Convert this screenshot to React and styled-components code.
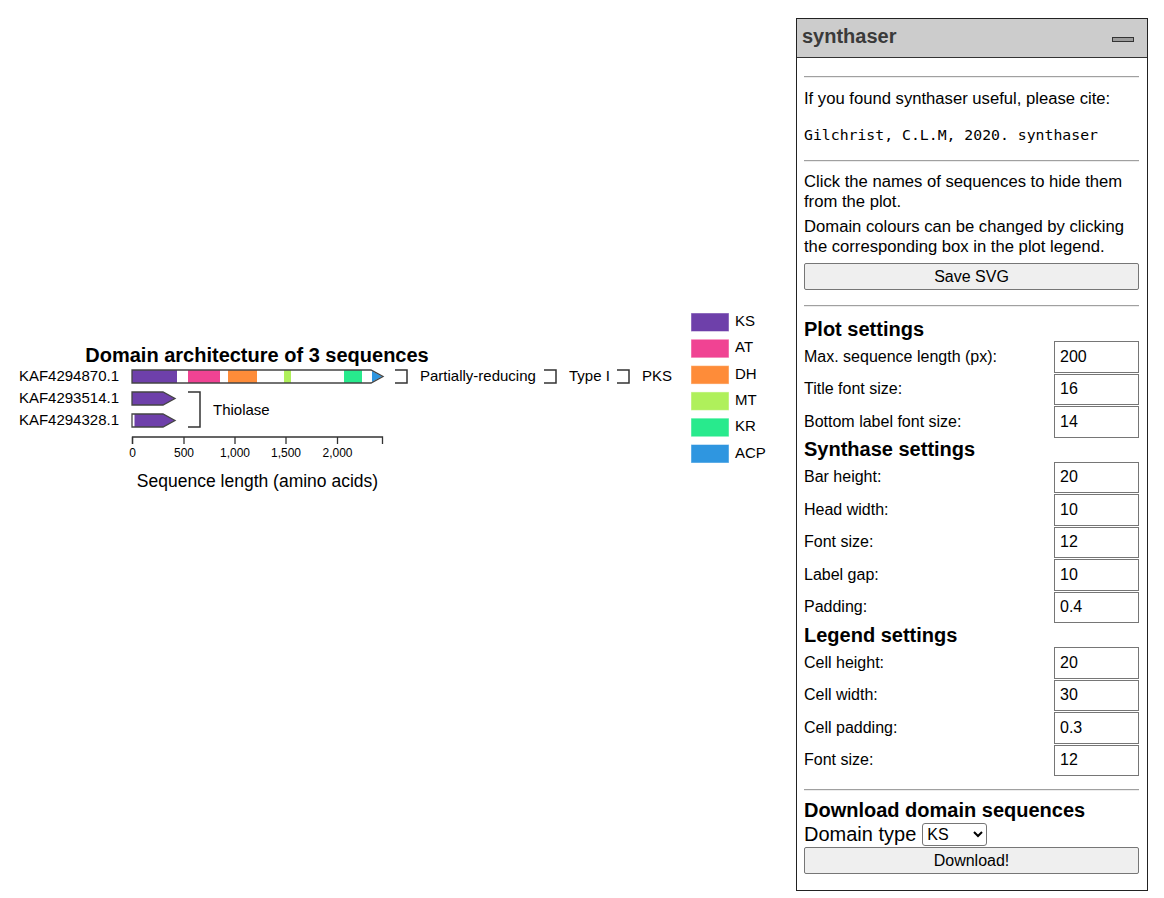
import React from 'react';
import styled, {createGlobalStyle} from 'styled-components';

const GlobalStyle = createGlobalStyle`
  body {
    margin: 0;
    background: #fff;
    font-family: "Liberation Sans", Arial, sans-serif;
    color: #000;
    overflow: hidden;
  }
`;

const Page = styled.div`
  display: flex;
  justify-content: space-between;
  align-items: flex-start;
  height: 898px;
  box-sizing: border-box;
  padding: 18px 16px 0 0;
`;

const Plot = styled.svg`
  display: block;
  margin-top: 282px;
  font-family: "Liberation Sans", Arial, sans-serif;
`;

const Panel = styled.div`
  width: 352px;
  box-sizing: border-box;
  border: 1px solid #222;
  background: #fff;
`;

const Header = styled.div`
  display: flex;
  align-items: center;
  justify-content: space-between;
  height: 38px;
  background: #cccccc;
  border-bottom: 1px solid #333;
  padding: 0 13px 0 5px;
`;

const Title = styled.span`
  font-size: 20px;
  font-weight: bold;
  color: #3a3a3a;
  margin-top: -4px;
`;

const Minimize = styled.div`
  width: 20px;
  height: 3px;
  border: 1.5px solid #333;
  background: #9c9c9c;
  margin-top: 2px;
`;

const Body = styled.div`
  display: flex;
  flex-direction: column;
  padding: 0 8px 16px 7px;
`;

const Rule = styled.hr`
  border: none;
  border-top: 1px solid #a0a0a0;
  border-bottom: 1px solid #ececec;
  height: 0;
  width: 100%;
  margin: ${(p) => p.$top}px 0 0;
`;

const Text = styled.p`
  margin: ${(p) => p.$top}px 0 0;
  font-size: 16.65px;
  line-height: ${(p) => p.$lh || 18}px;
`;

const Code = styled.code`
  display: block;
  margin-top: 17.5px;
  font-family: "DejaVu Sans Mono", "Liberation Mono", monospace;
  font-size: 14.8px;
  line-height: 17px;
`;

const Button = styled.button`
  display: block;
  width: 100%;
  height: 27px;
  margin-top: ${(p) => p.$top}px;
  background: #efefef;
  border: 1px solid #767676;
  border-radius: 2px;
  font-family: "Liberation Sans", Arial, sans-serif;
  font-size: 16px;
  color: #000;
  padding: 0;
`;

const Heading = styled.h3`
  margin: ${(p) => p.$top || 0}px 0 0;
  font-size: 20px;
  line-height: 23px;
  font-weight: bold;
`;

const Row = styled.label`
  display: flex;
  align-items: center;
  justify-content: space-between;
  height: 32.5px;
  font-size: 16px;
`;

const NumberInput = styled.input`
  width: 85px;
  height: 31.5px;
  box-sizing: border-box;
  border: 1px solid #767676;
  border-radius: 0;
  padding: 0 5px;
  font-family: "Liberation Sans", Arial, sans-serif;
  font-size: 16px;
  color: #000;
`;

const SelectRow = styled.div`
  display: flex;
  align-items: center;
  gap: 6px;
  height: 25px;
  font-size: 20px;
`;

const Select = styled.select`
  width: 65px;
  height: 23px;
  border: 1px solid #767676;
  border-radius: 3px;
  font-family: "Liberation Sans", Arial, sans-serif;
  font-size: 16px;
  background: #fff;
  color: #000;
`;

const domains = [
  {name: 'KS', color: '#6e40aa'},
  {name: 'AT', color: '#f04393'},
  {name: 'DH', color: '#fe8c39'},
  {name: 'MT', color: '#aff05b'},
  {name: 'KR', color: '#28ea8d'},
  {name: 'ACP', color: '#2f96e0'},
];
const col = Object.fromEntries(domains.map((d) => [d.name, d.color]));

const ticks = [
  {x: 132.5, label: '0'},
  {x: 184, label: '500'},
  {x: 235, label: '1,000'},
  {x: 286, label: '1,500'},
  {x: 337.5, label: '2,000'},
];

const plotSettings = [
  ['Max. sequence length (px):', '200'],
  ['Title font size:', '16'],
  ['Bottom label font size:', '14'],
];
const synthaseSettings = [
  ['Bar height:', '20'],
  ['Head width:', '10'],
  ['Font size:', '12'],
  ['Label gap:', '10'],
  ['Padding:', '0.4'],
];
const legendSettings = [
  ['Cell height:', '20'],
  ['Cell width:', '30'],
  ['Cell padding:', '0.3'],
  ['Font size:', '12'],
];

function Bracket({x, y1, y2}) {
  return <path d={`M${x},${y1} H${x + 12} V${y2} H${x}`} fill="none" stroke="#333" strokeWidth="1.5" />;
}

function Sequence({y, end, children}) {
  const top = y - 6.5;
  const bot = y + 6.5;
  const outline = `M132,${top} H${end} L${end + 12},${y} L${end},${bot} H132 Z`;
  return (
    <g>
      <path d={outline} fill="#fff" />
      {children}
      <path d={outline} fill="none" stroke="#444" strokeWidth="1.3" />
    </g>
  );
}

function DomainPlot() {
  const r1 = 376.5;
  return (
    <Plot width="780" height="200" viewBox="0 300 780 200">
      <text x="257" y="354.5" fontSize="20" fontWeight="bold" textAnchor="middle" dominantBaseline="central">
        Domain architecture of 3 sequences
      </text>

      {[
        ['KAF4294870.1', r1],
        ['KAF4293514.1', 398.5],
        ['KAF4294328.1', 420.5],
      ].map(([name, y]) => (
        <text key={name} x="119" y={y - 1} fontSize="15" textAnchor="end" dominantBaseline="central">
          {name}
        </text>
      ))}

      <Sequence y={r1} end={371}>
        <rect x="132" y={r1 - 6.5} width="45" height="13" fill={col.KS} />
        <rect x="188" y={r1 - 6.5} width="32" height="13" fill={col.AT} />
        <rect x="228" y={r1 - 6.5} width="29" height="13" fill={col.DH} />
        <rect x="284" y={r1 - 6.5} width="7" height="13" fill={col.MT} />
        <rect x="344" y={r1 - 6.5} width="18" height="13" fill={col.KR} />
        <path d={`M372,${r1 - 5.5} L382,${r1} L372,${r1 + 5.5} Z`} fill={col.ACP} />
      </Sequence>
      <Sequence y={398.5} end={163}>
        <path d="M132,392 H163 L175,398.5 L163,405 H132 Z" fill={col.KS} />
      </Sequence>
      <Sequence y={420.5} end={163}>
        <path d="M134.5,414 H163 L175,420.5 L163,427 H134.5 Z" fill={col.KS} />
      </Sequence>

      <Bracket x={395} y1={370} y2={383} />
      <text x="420" y={r1 - 1} fontSize="15" dominantBaseline="central">Partially-reducing</text>
      <Bracket x={544} y1={370} y2={383} />
      <text x="569" y={r1 - 1} fontSize="15" dominantBaseline="central">Type I</text>
      <Bracket x={617} y1={370} y2={383} />
      <text x="642" y={r1 - 1} fontSize="15" dominantBaseline="central">PKS</text>

      <Bracket x={188} y1={392} y2={427} />
      <text x="213" y="409.5" fontSize="15" dominantBaseline="central">Thiolase</text>

      <path d="M132.5,444 V437 H382.5 V444" fill="none" stroke="#333" strokeWidth="1.3" />
      {ticks.map((t) => (
        <g key={t.label}>
          <line x1={t.x} x2={t.x} y1="437" y2="444" stroke="#333" strokeWidth="1.3" />
          <text x={t.x} y="452.5" fontSize="12" textAnchor="middle" dominantBaseline="central">
            {t.label}
          </text>
        </g>
      ))}
      <text x="257.5" y="481" fontSize="17.5" textAnchor="middle" dominantBaseline="central">
        Sequence length (amino acids)
      </text>

      {domains.map((d, i) => {
        const y = 313 + i * 26.3;
        return (
          <g key={d.name}>
            <rect x="691.5" y={y + 0.5} width="37" height="17.5" fill={d.color} stroke={d.color} strokeOpacity="0.55" strokeWidth="1" />
            <text x="735" y={y + 7.5} fontSize="15" dominantBaseline="central">
              {d.name}
            </text>
          </g>
        );
      })}
    </Plot>
  );
}

function SettingRows({rows}) {
  return rows.map(([label, value]) => (
    <Row key={label}>
      <span>{label}</span>
      <NumberInput type="text" defaultValue={value} />
    </Row>
  ));
}

const App = () => {
  return (
    <Page>
      <GlobalStyle />
      <DomainPlot />
      <Panel>
        <Header>
          <Title>synthaser</Title>
          <Minimize />
        </Header>
        <Body>
          <Rule $top={18} />
          <Text $top={12}>If you found synthaser useful, please cite:</Text>
          <Code>Gilchrist, C.L.M, 2020. synthaser</Code>
          <Rule $top={17.5} />
          <Text $top={10} $lh={20}>
            Click the names of sequences to hide them from the plot.
          </Text>
          <Text $top={5} $lh={20}>
            Domain colours can be changed by clicking the corresponding box in the plot legend.
          </Text>
          <Button $top={6}>Save SVG</Button>
          <Rule $top={15} />
          <Heading $top={10.5}>Plot settings</Heading>
          <SettingRows rows={plotSettings} />
          <Heading>Synthase settings</Heading>
          <SettingRows rows={synthaseSettings} />
          <Heading>Legend settings</Heading>
          <SettingRows rows={legendSettings} />
          <Rule $top={12} />
          <Heading $top={8.5}>Download domain sequences</Heading>
          <SelectRow>
            <span>Domain type</span>
            <Select defaultValue="KS">
              {domains.map((d) => (
                <option key={d.name}>{d.name}</option>
              ))}
            </Select>
          </SelectRow>
          <Button $top={0}>Download!</Button>
        </Body>
      </Panel>
    </Page>
  );
};

export default App;
